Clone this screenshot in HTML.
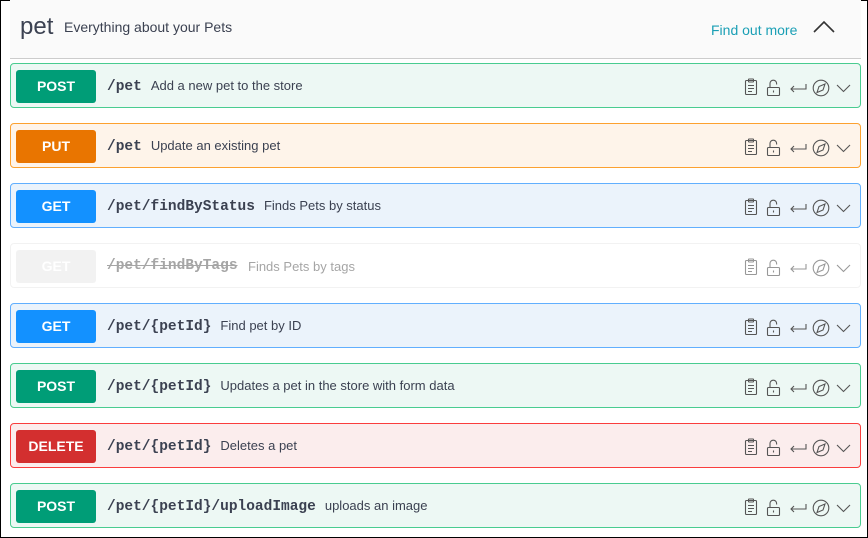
<!DOCTYPE html>
<html><head><meta charset="utf-8"><style>
*{box-sizing:border-box;margin:0;padding:0}
html,body{width:868px;height:538px;overflow:hidden;background:#fff}
body{border:1px solid #000;position:relative;font-family:"Liberation Sans",sans-serif}
.hdr{position:absolute;left:9px;top:-1px;width:851px;height:59px;background:#fafafa;border-bottom:1px solid #ccc}
.hdr .t{position:absolute;left:10px;top:13px;font-size:24px;color:#3b4151}
.hdr .d{position:absolute;left:54px;top:19px;font-size:14px;color:#3b4151}
.hdr .f{position:absolute;left:701px;top:22px;font-size:14px;color:#1a9fb5}
.hdr svg{position:absolute;left:802px;top:17px}
.op{position:absolute;left:9px;width:851px;height:45px;border:1px solid;border-radius:4px}
.b{position:absolute;left:5px;top:6px;width:80px;height:33px;border-radius:3px;color:#fff;font-weight:bold;font-size:14px;text-align:center;line-height:33px}
.p{position:absolute;left:96px;top:14px;font-family:"Liberation Mono",monospace;font-weight:bold;font-size:14.5px;color:#3b4151}
.s{font-family:"Liberation Sans",sans-serif;font-weight:normal;font-size:13px;margin-left:9px}
.ic{position:absolute;left:729px;top:12px}
.post{border-color:#49cc90;background:#edf8f4}.post .b{background:#009d77}
.put{border-color:#fca130;background:#fef4ea}.put .b{background:#e97500}
.get{border-color:#61affe;background:#ebf3fb}.get .b{background:#1391ff}
.del{border-color:#f93e3e;background:#fbeded}.del .b{background:#d32f2f}
.dep{border-color:#ebebeb;background:#fff;opacity:.6}.dep .b{background:#ebebeb}
.dep .p{color:#6b6b6b;text-decoration:line-through}
</style></head><body>
<div class="hdr"><span class="t">pet</span><span class="d">Everything about your Pets</span><span class="f">Find out more</span>
<svg width="24" height="20" viewBox="0 0 24 20"><path d="M2 15 L12 5 L22 15" fill="none" stroke="#333" stroke-width="1.6"/></svg></div>

<svg width="0" height="0" style="position:absolute"><defs><g id="icons" fill="none" stroke="#555" stroke-width="1.1">
<rect x="5.5" y="4.5" width="11" height="14" rx="1"/><rect x="8.5" y="3" width="5" height="3" rx=".5"/><path d="M8 9.5h6M8 12.5h6M8 15.5h4"/>
<rect x="27.5" y="11.5" width="12" height="8" rx="1"/><path d="M30 11.5V7.5a3.3 3.3 0 0 1 6.6 0v1"/><path d="M33.5 14.5v2"/>
<path d="M66 8v5H51M54 10l-3 3 3 3"/>
<circle cx="81" cy="12" r="7.8"/><path d="M85 8l-6 2.5-2 6 6-2.5z"/>
<path d="M97 9l6.5 6.5 6.5-6.5"/></g></defs></svg>

<div class="op post" style="top:62px"><div class="b">POST</div><div class="p">/pet<span class="s">Add a new pet to the store</span></div><svg class="ic" width="120" height="24"><use href="#icons"/></svg></div>
<div class="op put" style="top:122px"><div class="b">PUT</div><div class="p">/pet<span class="s">Update an existing pet</span></div><svg class="ic" width="120" height="24"><use href="#icons"/></svg></div>
<div class="op get" style="top:182px"><div class="b">GET</div><div class="p">/pet/findByStatus<span class="s">Finds Pets by status</span></div><svg class="ic" width="120" height="24"><use href="#icons"/></svg></div>
<div class="op dep" style="top:242px"><div class="b">GET</div><div class="p">/pet/findByTags</div><div class="p" style="left:237px;top:15px;font-family:'Liberation Sans';font-weight:normal;font-size:13px;text-decoration:none">Finds Pets by tags</div><svg class="ic" width="120" height="24"><use href="#icons"/></svg></div>
<div class="op get" style="top:302px"><div class="b">GET</div><div class="p">/pet/{petId}<span class="s">Find pet by ID</span></div><svg class="ic" width="120" height="24"><use href="#icons"/></svg></div>
<div class="op post" style="top:362px"><div class="b">POST</div><div class="p">/pet/{petId}<span class="s">Updates a pet in the store with form data</span></div><svg class="ic" width="120" height="24"><use href="#icons"/></svg></div>
<div class="op del" style="top:422px"><div class="b">DELETE</div><div class="p">/pet/{petId}<span class="s">Deletes a pet</span></div><svg class="ic" width="120" height="24"><use href="#icons"/></svg></div>
<div class="op post" style="top:482px"><div class="b">POST</div><div class="p">/pet/{petId}/uploadImage<span class="s">uploads an image</span></div><svg class="ic" width="120" height="24"><use href="#icons"/></svg></div>
</body></html>
